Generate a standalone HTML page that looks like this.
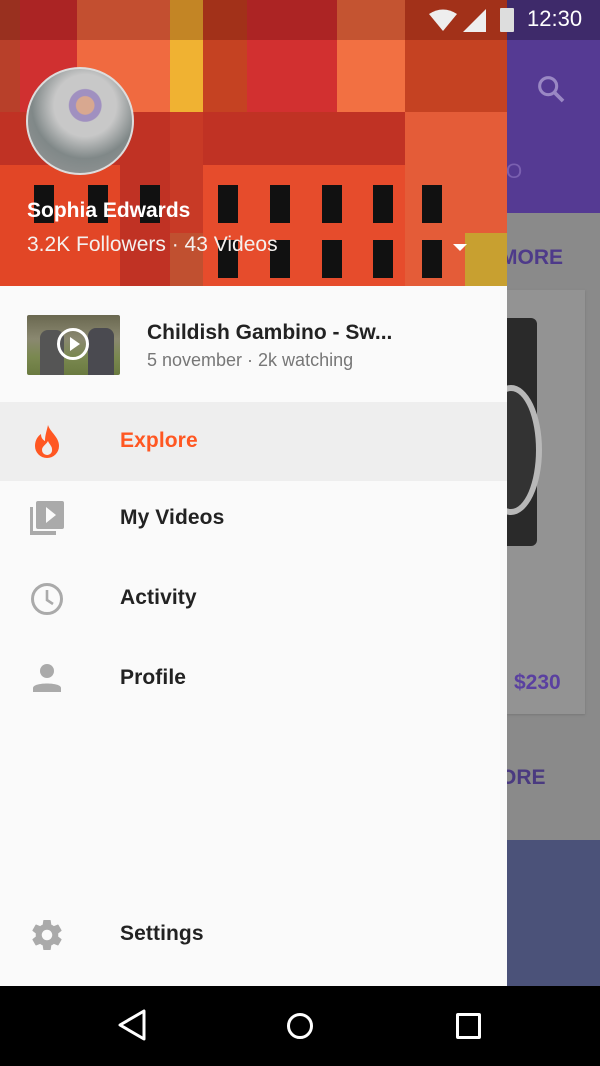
<!DOCTYPE html>
<html><head><meta charset="utf-8"><style>
*{margin:0;padding:0;box-sizing:border-box}
body{width:600px;height:1066px;position:relative;overflow:hidden;font-family:"Liberation Sans",sans-serif;background:#fafafa}
.a{position:absolute}
.it{position:absolute;left:120px;font-size:21px;font-weight:bold;color:#222;letter-spacing:0.1px}
</style></head><body>
<!-- right background -->
<div class="a" style="left:507px;top:0;width:93px;height:40px;background:#3e2a6a"></div>
<div class="a" style="left:507px;top:40px;width:93px;height:173px;background:#553a93"></div>
<div class="a" style="left:507px;top:213px;width:93px;height:627px;background:#8a8a8a"></div>
<div class="a" style="left:507px;top:840px;width:93px;height:146px;background:#4b5279"></div>
<div class="a" style="left:507px;top:290px;width:78px;height:424px;background:#939393;box-shadow:0 1px 2px #777"></div>
<div class="a" style="left:507px;top:318px;width:30px;height:228px;background:#2a2a2a;border-radius:0 6px 6px 0"></div>
<div class="a" style="left:480px;top:385px;width:62px;height:130px;border:6px solid #b8b8b8;border-radius:50%;background:#333"></div>
<div class="a" style="left:514px;top:671px;color:#5a40a0;font-size:21px;font-weight:bold">$230</div>
<div class="a" style="left:500px;top:246px;color:#4e3a8a;font-size:21px;font-weight:bold">MORE</div>
<div class="a" style="left:500px;top:766px;color:#4a3a80;font-size:21px;font-weight:bold">ORE</div>
<div class="a" style="left:500px;top:160px;color:#7a60b0;font-size:21px">IO</div>
<svg class="a" style="left:534px;top:72px" width="34" height="34" viewBox="0 0 24 24"><circle cx="10" cy="10" r="6" fill="none" stroke="#9a88c4" stroke-width="2.2"/><path d="M14.5 14.5l6 6" stroke="#9a88c4" stroke-width="2.6"/></svg>

<!-- drawer bg -->
<div class="a" style="left:0;top:286px;width:507px;height:700px;background:#fafafa"></div>

<!-- header -->
<div class="a" style="left:0;top:0;width:507px;height:286px;background:#c03224;overflow:hidden">
 <div class="a" style="left:0;top:0;width:20px;height:112px;background:#b8402a"></div>
 <div class="a" style="left:20px;top:0;width:57px;height:112px;background:#d03030"></div>
 <div class="a" style="left:77px;top:0;width:93px;height:112px;background:#f06a40"></div>
 <div class="a" style="left:170px;top:0;width:33px;height:112px;background:#f0b232"></div>
 <div class="a" style="left:203px;top:0;width:44px;height:112px;background:#c54222"></div>
 <div class="a" style="left:247px;top:0;width:90px;height:112px;background:#d23030"></div>
 <div class="a" style="left:337px;top:0;width:68px;height:112px;background:#f27042"></div>
 <div class="a" style="left:405px;top:0;width:102px;height:112px;background:#c54222"></div>
 <div class="a" style="left:0;top:165px;width:120px;height:121px;background:#e24626"></div>
 <div class="a" style="left:203px;top:165px;width:110px;height:121px;background:#e64c2c"></div>
 <div class="a" style="left:308px;top:165px;width:97px;height:121px;background:#e64c2c"></div>
 <div class="a" style="left:405px;top:112px;width:102px;height:174px;background:#e45c38"></div>
 <div class="a" style="left:465px;top:233px;width:42px;height:53px;background:#c8a030"></div>
 <div class="a" style="left:170px;top:112px;width:33px;height:174px;background:#c83a26"></div>
 <div class="a" style="left:170px;top:233px;width:33px;height:53px;background:#c05030"></div>
 <div class="a" style="left:218px;top:185px;width:20px;height:38px;background:#111"></div>
 <div class="a" style="left:270px;top:185px;width:20px;height:38px;background:#111"></div>
 <div class="a" style="left:322px;top:185px;width:20px;height:38px;background:#111"></div>
 <div class="a" style="left:373px;top:185px;width:20px;height:38px;background:#111"></div>
 <div class="a" style="left:34px;top:185px;width:20px;height:38px;background:#111"></div>
 <div class="a" style="left:88px;top:185px;width:20px;height:38px;background:#111"></div>
 <div class="a" style="left:140px;top:185px;width:20px;height:38px;background:#111"></div>
 <div class="a" style="left:218px;top:240px;width:20px;height:38px;background:#111"></div>
 <div class="a" style="left:270px;top:240px;width:20px;height:38px;background:#111"></div>
 <div class="a" style="left:322px;top:240px;width:20px;height:38px;background:#111"></div>
 <div class="a" style="left:373px;top:240px;width:20px;height:38px;background:#111"></div>
 <div class="a" style="left:422px;top:240px;width:20px;height:38px;background:#111"></div>
 <div class="a" style="left:422px;top:185px;width:20px;height:38px;background:#111"></div>
 <div class="a" style="left:0;top:0;width:507px;height:40px;background:rgba(60,0,0,0.25)"></div>
 <div class="a" style="left:26px;top:67px;width:108px;height:108px;border-radius:50%;background:radial-gradient(circle at 55% 35%,#d8a890 0 10%,#a090c0 11% 18%,#c8c8c8 19% 35%,#808888 60%,#9a9a9a);border:2px solid #ddd"></div>
 <div class="a" style="left:27px;top:199px;color:#fff;font-size:21px;font-weight:bold">Sophia Edwards</div>
 <div class="a" style="left:27px;top:233px;color:#f4f0ee;font-size:21px">3.2K Followers · 43 Videos</div>
 <div class="a" style="left:453px;top:244px;width:0;height:0;border-left:7px solid transparent;border-right:7px solid transparent;border-top:7px solid #fff"></div>
</div>
<!-- status icons -->
<svg class="a" style="left:428px;top:8px" width="30" height="24" viewBox="0 0 30 24"><path d="M1 6Q15 -3 29 6L15 23Z" fill="#eee"/></svg>
<svg class="a" style="left:463px;top:8px" width="24" height="24"><path d="M23 1V24H0Z" fill="#eee"/></svg>
<div class="a" style="left:500px;top:8px;width:14px;height:24px;background:#ddd;border-radius:1px"></div>
<div class="a" style="left:527px;top:6px;color:#fff;font-size:22px">12:30</div>

<!-- video row -->
<div class="a" style="left:27px;top:315px;width:93px;height:60px;border-radius:2px;background:linear-gradient(180deg,#6a6850 0,#8a8870 40%,#7a8850 70%,#6a7a40)"></div>
<div class="a" style="left:40px;top:330px;width:24px;height:45px;background:#555;border-radius:8px 8px 0 0"></div>
<div class="a" style="left:88px;top:328px;width:26px;height:47px;background:#4a4a50;border-radius:8px 8px 0 0"></div>
<div class="a" style="left:57px;top:328px;width:32px;height:32px;border:3px solid #fff;border-radius:50%"></div>
<div class="a" style="left:70px;top:337px;width:0;height:0;border-top:7px solid transparent;border-bottom:7px solid transparent;border-left:10px solid #fff"></div>
<div class="a" style="left:147px;top:321px;font-size:21px;font-weight:bold;color:#222">Childish Gambino - Sw...</div>
<div class="a" style="left:147px;top:350px;font-size:18px;color:#777">5 november · 2k watching</div>

<!-- menu -->
<div class="a" style="left:0;top:402px;width:507px;height:79px;background:#eeeeee"></div>
<svg class="a" style="left:32px;top:424px" width="30" height="35" viewBox="0 0 30 35"><path d="M16 1C18 8 27 13 27 22A12 12 0 0 1 3 22C3 16 6 12 9 10C9 14 11 16 13 17C13 11 15 6 16 1ZM15 31A5 5 0 0 0 20 25C20 22 17 20 16 17C14 21 10 22 10 26A5 5 0 0 0 15 31Z" fill="#ff5722" fill-rule="evenodd"/></svg>
<div class="it" style="top:429px;color:#ff5722">Explore</div>
<svg class="a" style="left:30px;top:501px" width="34" height="34" viewBox="0 0 34 34"><path d="M0 6H3V30H26V34H0Z" fill="#aaa"/><rect x="6" y="0" width="28" height="28" rx="2" fill="#aaa"/><path d="M16 6L26 14L16 22Z" fill="#fafafa"/></svg>
<div class="it" style="top:506px">My Videos</div>
<svg class="a" style="left:30px;top:582px" width="34" height="34" viewBox="0 0 34 34"><circle cx="17" cy="17" r="14.5" fill="none" stroke="#aaa" stroke-width="3"/><path d="M17 8V18L23 22" fill="none" stroke="#aaa" stroke-width="2.6"/></svg>
<div class="it" style="top:586px">Activity</div>
<svg class="a" style="left:32px;top:664px" width="30" height="28" viewBox="0 0 30 28"><circle cx="15" cy="7" r="7" fill="#aaa"/><path d="M1 28V24C1 18 29 18 29 24V28Z" fill="#aaa"/></svg>
<div class="it" style="top:666px">Profile</div>
<svg class="a" style="left:29px;top:917px" width="36" height="36" viewBox="0 0 24 24"><path fill="#aaa" d="M19.43 12.98c.04-.32.07-.64.07-.98s-.03-.66-.07-.98l2.11-1.65c.19-.15.24-.42.12-.64l-2-3.46c-.12-.22-.39-.3-.61-.22l-2.490 1c-.52-.4-1.080-.73-1.690-.98l-.38-2.650C14.460 2.180 14.250 2 14 2h-4c-.25 0-.46.18-.49.42l-.38 2.65c-.61.25-1.17.59-1.69.98l-2.49-1c-.23-.09-.49 0-.61.22l-2 3.46c-.13.22-.07.49.12.64l2.11 1.65c-.04.32-.07.65-.07.98s.03.66.07.98l-2.11 1.65c-.19.15-.24.42-.12.64l2 3.46c.12.22.39.3.61.22l2.49-1c.52.4 1.08.73 1.69.98l.38 2.65c.03.24.24.42.49.42h4c.25 0 .46-.18.49-.42l.38-2.65c.61-.25 1.17-.59 1.69-.98l2.49 1c.23.09.49 0 .61-.22l2-3.46c.12-.22.07-.49-.12-.64l-2.11-1.65zM12 15.5c-1.93 0-3.5-1.57-3.5-3.5s1.57-3.5 3.5-3.5 3.5 1.57 3.5 3.5-1.57 3.5-3.5 3.5z"/></svg>
<div class="it" style="top:922px">Settings</div>

<!-- nav bar -->
<div class="a" style="left:0;top:986px;width:600px;height:80px;background:#000"></div>
<svg class="a" style="left:116px;top:1008px" width="34" height="34" viewBox="0 0 34 34"><path d="M28 3V31L4 17Z" fill="none" stroke="#fff" stroke-width="3" stroke-linejoin="round"/></svg>
<div class="a" style="left:287px;top:1013px;width:26px;height:26px;border:3px solid #fff;border-radius:50%"></div>
<div class="a" style="left:456px;top:1013px;width:25px;height:26px;border:3px solid #fff;border-radius:2px"></div>
</body></html>
